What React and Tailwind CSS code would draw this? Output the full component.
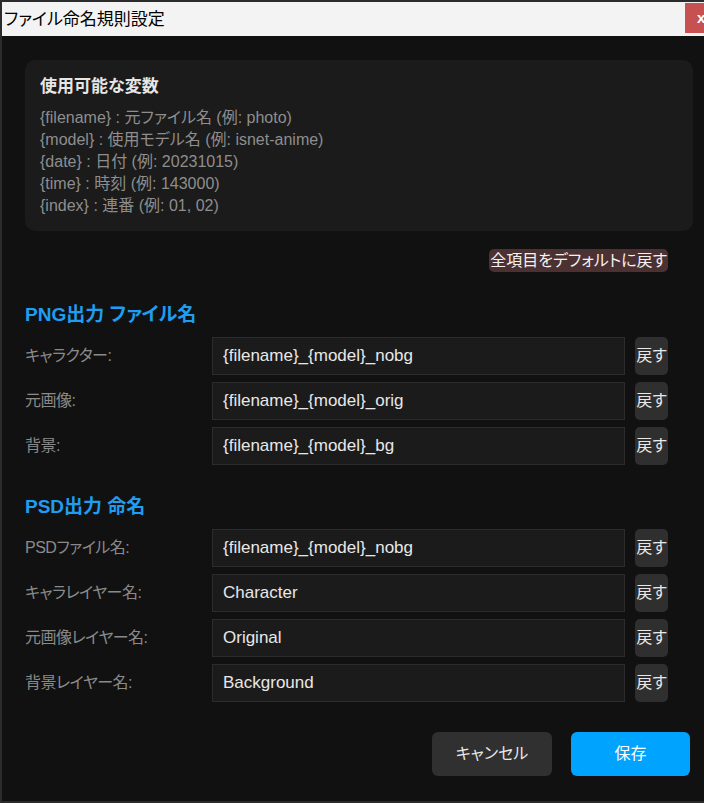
const jp = "font-['Liberation_Sans','Noto_Sans_CJK_JP',sans-serif] [font-feature-settings:'palt']";

const variables = [
    "{filename} : 元ファイル名 (例: photo)",
    "{model} : 使用モデル名 (例: isnet-anime)",
    "{date} : 日付 (例: 20231015)",
    "{time} : 時刻 (例: 143000)",
    "{index} : 連番 (例: 01, 02)",
];

const pngRows = [
    { label: "キャラクター:", value: "{filename}_{model}_nobg" },
    { label: "元画像:", value: "{filename}_{model}_orig" },
    { label: "背景:", value: "{filename}_{model}_bg" },
];

const psdRows = [
    { label: "PSDファイル名:", value: "{filename}_{model}_nobg" },
    { label: "キャラレイヤー名:", value: "Character" },
    { label: "元画像レイヤー名:", value: "Original" },
    { label: "背景レイヤー名:", value: "Background" },
];

const FieldRow = ({ label, value }) => (
    <div className="flex items-center h-[38px]">
        <div className="w-[187px] flex-none text-[16px] tracking-[-0.5px] text-[#8a8a8a]">{label}</div>
        <input
            defaultValue={value}
            readOnly
            className="flex-1 min-w-0 h-[38px] bg-[#1b1b1b] border border-[#2c2c2c] pl-[10px] text-[17px] text-[#e8e8e8] outline-none"
        />
        <button className="ml-[10px] w-[33px] h-[38px] flex-none flex items-center justify-center rounded-[5px] bg-[#2f2f2f] text-[16px] text-[#e8e8e8] whitespace-nowrap">
            戻す
        </button>
    </div>
);

const Section = ({ title, rows }) => (
    <div>
        <h2 className="text-[19px] leading-[26px] font-bold text-[#1e9df1]">{title}</h2>
        <div className="mt-[9px] flex flex-col gap-[7px]">
            {rows.map((r) => (
                <FieldRow key={r.label} {...r} />
            ))}
        </div>
    </div>
);

export default function App() {
    return (
        <div className={`w-[704px] h-[803px] overflow-hidden flex flex-col bg-[#111111] border-l-2 border-t-2 border-b-2 border-[#2b2b2b] ${jp}`}>
            {/* title bar */}
            <div className="h-[34px] flex-none flex items-start justify-between bg-[#f3f3f3]">
                <span className="pl-[2px] mt-[4px] text-[17px] leading-[24px] text-black font-['Noto_Sans_CJK_JP',sans-serif]">ファイル命名規則設定</span>
                <div className="mt-px w-[19px] h-[30px] overflow-hidden flex items-center pl-[12px] bg-[#c75050] text-white font-bold text-[15px]">
                    x
                </div>
            </div>

            <div className="flex-1 pl-[23px] pr-[11px] pt-[24px]">
                {/* variables card */}
                <div className="h-[171px] rounded-[10px] bg-[#1b1b1b] px-[15px] pt-[15px]">
                    <h3 className="text-[17px] leading-[24px] font-bold text-[#e6e6e6]">使用可能な変数</h3>
                    <div className="mt-[8px] text-[16px] leading-[22px] text-[#8e8e8e]">
                        {variables.map((v) => (
                            <div key={v}>{v}</div>
                        ))}
                    </div>
                </div>

                <div className="pr-[25px]">
                    <div className="mt-[18px] flex justify-end">
                        <button className="h-[23px] px-[1px] rounded-[5px] bg-[#4b3131] text-[16px] leading-[23px] text-[#f2f2f2]">
                            全項目をデフォルトに戻す
                        </button>
                    </div>

                    <div className="mt-[30px]">
                        <Section title="PNG出力 ファイル名" rows={pngRows} />
                    </div>
                    <div className="mt-[29px]">
                        <Section title="PSD出力 命名" rows={psdRows} />
                    </div>
                </div>

                {/* footer */}
                <div className="mt-[30px] pr-[3px] flex justify-end gap-[19px]">
                    <button className="w-[120px] h-[44px] rounded-[6px] bg-[#303030] text-[16px] text-[#e8e8e8]">キャンセル</button>
                    <button className="w-[119px] h-[44px] rounded-[6px] bg-[#00a4ff] text-[16px] text-white">保存</button>
                </div>
            </div>
        </div>
    );
}
